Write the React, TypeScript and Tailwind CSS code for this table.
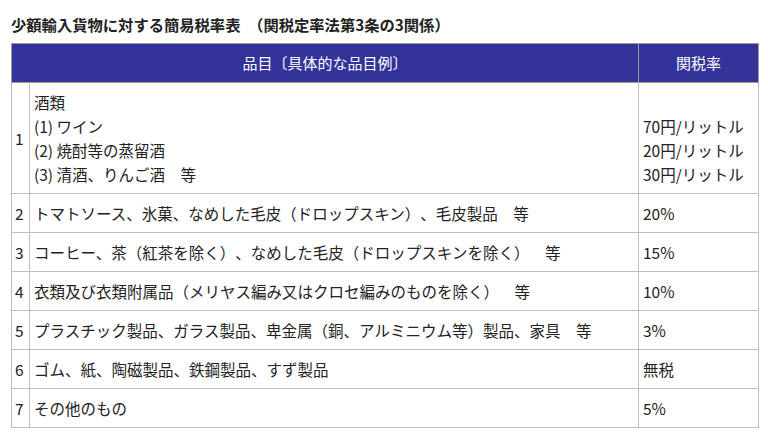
const rows: { no: string; item: string; rate: string }[] = [
  { no: "2", item: "トマトソース、氷菓、なめした毛皮（ドロップスキン）、毛皮製品　等", rate: "20%" },
  { no: "3", item: "コーヒー、茶（紅茶を除く）、なめした毛皮（ドロップスキンを除く）　等", rate: "15%" },
  { no: "4", item: "衣類及び衣類附属品（メリヤス編み又はクロセ編みのものを除く）　等", rate: "10%" },
  { no: "5", item: "プラスチック製品、ガラス製品、卑金属（銅、アルミニウム等）製品、家具　等", rate: "3%" },
  { no: "6", item: "ゴム、紙、陶磁製品、鉄鋼製品、すず製品", rate: "無税" },
  { no: "7", item: "その他のもの", rate: "5%" },
];

export default function App() {
  return (
    <div
      className="min-h-[436px] bg-white px-[11px] pt-3 text-[15.5px] leading-[24px] text-[#222]"
      style={{ fontFamily: '"Noto Sans CJK JP", "Noto Sans", sans-serif' }}
    >
      <h2 className="mb-[7px] text-[15.3px] font-bold">
        少額輸入貨物に対する簡易税率表　（関税定率法第3条の3関係）
      </h2>
      <table className="w-[748px] table-fixed border-collapse border border-[#bdbdbd] [text-spacing-trim:space-all]">
        <colgroup>
          <col className="w-[18px]" />
          <col />
          <col className="w-[120px]" />
        </colgroup>
        <thead>
          <tr className="bg-[#333399] text-[15px] text-white">
            <th colSpan={2} className="border border-[#9a9a9a] px-1 py-[7px] text-center font-normal">
              品目〔具体的な品目例〕
            </th>
            <th className="border border-[#9a9a9a] px-1 py-[7px] text-center font-normal">関税率</th>
          </tr>
        </thead>
        <tbody>
          <tr>
            <td className="border border-[#bdbdbd] px-[3px] py-[7px] align-middle">1</td>
            <td className="border border-[#bdbdbd] px-1 py-[7px]">
              <div>酒類</div>
              <div>(1) ワイン</div>
              <div>(2) 焼酎等の蒸留酒</div>
              <div>(3) 清酒、りんご酒　等</div>
            </td>
            <td className="border border-[#bdbdbd] px-1 py-[7px]">
              <div>&nbsp;</div>
              <div>70円/リットル</div>
              <div>20円/リットル</div>
              <div>30円/リットル</div>
            </td>
          </tr>
          {rows.map((r) => (
            <tr key={r.no}>
              <td className="border border-[#bdbdbd] px-[3px] py-[7px]">{r.no}</td>
              <td className="whitespace-nowrap border border-[#bdbdbd] px-1 py-[7px]">{r.item}</td>
              <td className="border border-[#bdbdbd] px-1 py-[7px]">{r.rate}</td>
            </tr>
          ))}
        </tbody>
      </table>
    </div>
  );
}
